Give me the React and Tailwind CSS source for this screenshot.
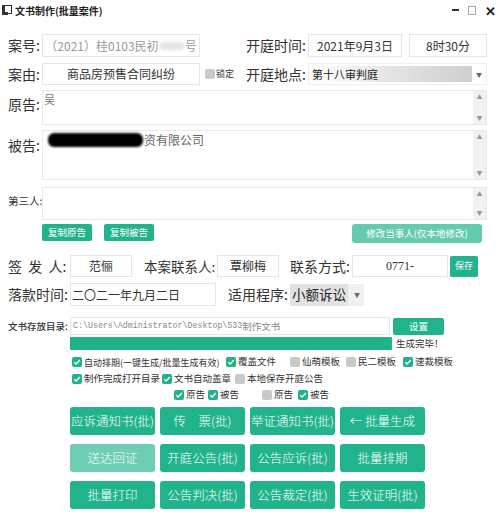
import React from "react";

const F = { fontFamily: '"Noto Sans CJK SC", "Noto Sans", sans-serif' };

function Check({ on }) {
  return on ? (
    <span className="w-[10px] h-[10px] rounded-[2px] bg-[#20b38b] flex items-center justify-center shrink-0">
      <svg width="8" height="8" viewBox="0 0 8 8">
        <path d="M1.2 4.2 L3.2 6 L6.8 2" stroke="white" strokeWidth="1.3" fill="none" />
      </svg>
    </span>
  ) : (
    <span className="w-[10px] h-[10px] rounded-[2px] bg-[#c9c9c9] shrink-0" />
  );
}

function CB({ on, label, w, small }) {
  return (
    <div className="flex items-center gap-[2px] shrink-0" style={{ width: w }}>
      <Check on={on} />
      <span className={(small ? "text-[9px]" : "text-[9.5px]") + " text-[#333] whitespace-nowrap leading-none"}>{label}</span>
    </div>
  );
}

function Scroll() {
  return (
    <div className="w-[13px] h-full bg-[#f1f1f1] flex flex-col justify-between items-center py-[3px] text-[6px] text-[#999] leading-none">
      <span>▲</span>
      <span>▼</span>
    </div>
  );
}

function Btn({ children, light }) {
  return (
    <div
      className={
        "h-[28px] rounded-[3px] flex items-center justify-center text-white text-[12.5px] font-light whitespace-nowrap " +
        (light ? "bg-[#6dceb3]" : "bg-[#21b48c]")
      }
    >
      {children}
    </div>
  );
}

export default function App() {
  return (
    <div className="w-[499px] h-[524px] bg-white overflow-hidden text-[#333]" style={F}>
      {/* title bar */}
      <div className="h-[20px] flex items-center pl-[2px] pr-[3px]">
        <svg width="10" height="10" viewBox="0 0 10 10" className="mr-[3px]">
          <rect x="0.5" y="0.5" width="9" height="8" fill="none" stroke="#333" strokeWidth="1" />
          <rect x="0" y="0" width="3" height="10" fill="#333" />
          <rect x="0" y="7" width="6" height="3" fill="#333" />
        </svg>
        <span className="text-[10px] font-bold text-[#222]">文书制作(批量案件)</span>
        <div className="ml-auto flex items-center gap-[9px]">
          <span className="w-[7px] h-[2px] bg-[#333]" />
          <span className="w-[8px] h-[9px] border border-[#aaa]" />
          <span className="text-[13px] font-bold leading-none text-[#222]">✕</span>
        </div>
      </div>

      {/* row 1 */}
      <div className="flex items-center mt-[14px] pl-[8px] h-[23px]">
        <span className="w-[34px] text-[14px] whitespace-nowrap shrink-0">案号:</span>
        <div className="w-[158px] h-full border border-[#e6e6e6] flex items-center justify-center text-[12px] text-[#9a9a9a] shrink-0">
          （2021）桂0103民初
          <span className="inline-block w-[24px] h-[8px] bg-[#e4e4e4] rounded-full blur-[1.5px] mx-[1px]" />
          号
        </div>
        <span className="ml-[46px] w-[62px] text-[14px] whitespace-nowrap shrink-0">开庭时间:</span>
        <div className="w-[94px] h-full border border-[#e6e6e6] flex items-center justify-center text-[12px] shrink-0">2021年9月3日</div>
        <div className="ml-[7px] w-[78px] h-full border border-[#e6e6e6] flex items-center justify-center text-[12px] shrink-0">8时30分</div>
      </div>

      {/* row 2 */}
      <div className="flex items-center mt-[6px] pl-[8px] h-[22px]">
        <span className="w-[34px] text-[14px] whitespace-nowrap shrink-0">案由:</span>
        <div className="w-[158px] h-full border border-[#e6e6e6] flex items-center justify-center text-[12px] shrink-0">商品房预售合同纠纷</div>
        <div className="w-[46px] flex items-center pl-[5px] shrink-0">
          <Check on={false} />
          <span className="text-[9px] ml-[1px] whitespace-nowrap">锁定</span>
        </div>
        <span className="w-[62px] text-[14px] whitespace-nowrap shrink-0">开庭地点:</span>
        <div className="w-[179px] h-full border border-[#eeeeee] flex items-center pl-[2px] pr-[4px] shrink-0">
          <div className="flex-1 h-[16px] flex items-center text-[11px] text-[#222] bg-gradient-to-r from-white via-[#e4e4e4] to-[#cfcfcf] pl-[1px]">
            第十八审判庭
          </div>
          <span className="text-[6px] text-[#666] ml-[4px]">▼</span>
        </div>
      </div>

      {/* 原告 */}
      <div className="flex mt-[5px] pl-[8px] h-[35px]">
        <span className="w-[34px] text-[14px] whitespace-nowrap shrink-0 mt-[4px]">原告:</span>
        <div className="w-[445px] h-full border border-[#e8e8e8] flex shrink-0">
          <div className="flex-1 text-[11px] text-[#777] pl-[1px] leading-[16px]">吴</div>
          <Scroll />
        </div>
      </div>

      {/* 被告 */}
      <div className="flex mt-[5px] pl-[8px] h-[50px]">
        <span className="w-[34px] text-[14px] whitespace-nowrap shrink-0 mt-[5px]">被告:</span>
        <div className="w-[445px] h-full border border-[#e8e8e8] flex shrink-0">
          <div className="flex-1 flex items-start pt-[1px] pl-[5px]">
            <span className="w-[95px] h-[14px] bg-black rounded-[6px] blur-[0.8px] mt-[1px]" />
            <span className="text-[12px] text-[#666] leading-[16px] ml-[1px]">资有限公司</span>
          </div>
          <Scroll />
        </div>
      </div>

      {/* 第三人 */}
      <div className="flex mt-[7px] pl-[8px] h-[33px]">
        <span className="w-[34px] text-[10.5px] whitespace-nowrap shrink-0 mt-[6px]">第三人:</span>
        <div className="w-[445px] h-full border border-[#e8e8e8] flex shrink-0">
          <div className="flex-1" />
          <Scroll />
        </div>
      </div>

      {/* copy buttons */}
      <div className="flex items-start mt-[4px] pl-[42px] h-[19px]">
        <div className="w-[50px] h-[17px] rounded-[2px] bg-[#21b48c] text-white text-[9.5px] flex items-center justify-center">复制原告</div>
        <div className="ml-[12px] w-[50px] h-[17px] rounded-[2px] bg-[#21b48c] text-white text-[9.5px] flex items-center justify-center">复制被告</div>
        <div className="ml-[198px] w-[130px] h-[19px] rounded-[3px] bg-[#65cbaf] text-white text-[9.5px] flex items-center justify-center whitespace-nowrap">修改当事人(仅本地修改)</div>
      </div>

      {/* 签发人 row */}
      <div className="flex items-center mt-[12px] pl-[8px] h-[22px]">
        <span className="w-[62px] text-[14px] whitespace-pre shrink-0">{"签  发  人:"}</span>
        <div className="w-[62px] h-full border border-[#e6e6e6] flex items-center justify-center text-[12px] shrink-0">范俪</div>
        <span className="ml-[12px] w-[73px] text-[13.5px] whitespace-nowrap shrink-0">本案联系人:</span>
        <div className="w-[62px] h-full border border-[#e6e6e6] flex items-center justify-center text-[12px] shrink-0">覃柳梅</div>
        <span className="ml-[11px] w-[62px] text-[14px] whitespace-nowrap shrink-0">联系方式:</span>
        <div className="w-[96px] h-full border border-[#e6e6e6] flex items-center justify-center text-[12px] shrink-0" style={{ fontFamily: '"Liberation Serif", serif' }}>0771-</div>
        <div className="ml-[2px] w-[28px] h-[21px] rounded-[2px] bg-[#21b48c] text-white text-[9px] flex items-center justify-center shrink-0">保存</div>
      </div>

      {/* 落款 row */}
      <div className="flex items-center mt-[6px] pl-[8px] h-[23px]">
        <span className="w-[62px] text-[14px] whitespace-nowrap shrink-0">落款时间:</span>
        <div className="w-[146px] h-full border border-[#e6e6e6] flex items-center pl-[1px] text-[12px] shrink-0">二〇二一年九月二日</div>
        <span className="ml-[12px] w-[62px] text-[14px] whitespace-nowrap shrink-0">适用程序:</span>
        <div className="w-[74px] h-[22px] bg-[#f0f0f0] flex items-center shrink-0">
          <span className="h-full bg-[#e2e2e2] flex items-center px-[2px] text-[13.5px] text-[#222] whitespace-nowrap">小额诉讼</span>
          <span className="text-[6px] text-[#666] ml-[6px]">▼</span>
        </div>
      </div>

      {/* 目录 row */}
      <div className="flex items-center mt-[11px] pl-[8px] h-[18px]">
        <span className="w-[62px] text-[9.5px] font-medium whitespace-nowrap shrink-0">文书存放目录:</span>
        <div className="w-[320px] h-full border border-[#e6e6e6] flex items-center pl-[2px] text-[#888] whitespace-nowrap shrink-0">
          <span className="text-[8.3px]" style={{ fontFamily: '"Liberation Mono", monospace' }}>C:\Users\Administrator\Desktop\533</span>
          <span className="text-[9.5px]">制作文书</span>
        </div>
        <div className="ml-[3px] w-[51px] h-[17px] rounded-[2px] bg-[#21b48c] text-white text-[9.5px] flex items-center justify-center shrink-0">设置</div>
      </div>

      {/* progress */}
      <div className="flex items-center mt-[2px] pl-[70px] h-[13px]">
        <div className="w-[322px] h-full bg-[#20b38b] rounded-[1px] shrink-0" />
        <span className="ml-[4px] text-[9.5px] whitespace-nowrap">生成完毕！</span>
      </div>

      {/* checkboxes */}
      <div className="flex items-center mt-[6px] pl-[72px] h-[12px]">
        <CB on small label="自动排期(一键生成/批量生成有效)" w={154} />
        <CB on label="覆盖文件" w={64} />
        <CB on={false} label="仙萌模板" w={56} />
        <CB on={false} label="民二模板" w={57} />
        <CB on label="速裁模板" w={60} />
      </div>
      <div className="flex items-center mt-[5px] pl-[72px] h-[12px]">
        <CB on label="制作完成打开目录" w={90} />
        <CB on label="文书自动盖章" w={73} />
        <CB on={false} label="本地保存开庭公告" w={100} />
      </div>
      <div className="flex items-center mt-[4px] pl-[174px] h-[12px]">
        <CB on label="原告" w={34} />
        <CB on label="被告" w={54} />
        <CB on={false} label="原告" w={36} />
        <CB on label="被告" w={40} />
      </div>

      {/* button grid */}
      <div className="mt-[6px] ml-[70px] grid grid-cols-[85px_85px_85px_85px] gap-x-[5px] gap-y-[9px]">
        <Btn>应诉通知书(批)</Btn>
        <Btn>{"传　票(批)"}</Btn>
        <Btn>举证通知书(批)</Btn>
        <Btn>{"←  批量生成"}</Btn>
        <Btn light>送达回证</Btn>
        <Btn>开庭公告(批)</Btn>
        <Btn>公告应诉(批)</Btn>
        <Btn>批量排期</Btn>
        <Btn>批量打印</Btn>
        <Btn>公告判决(批)</Btn>
        <Btn>公告裁定(批)</Btn>
        <Btn>生效证明(批)</Btn>
      </div>
    </div>
  );
}
